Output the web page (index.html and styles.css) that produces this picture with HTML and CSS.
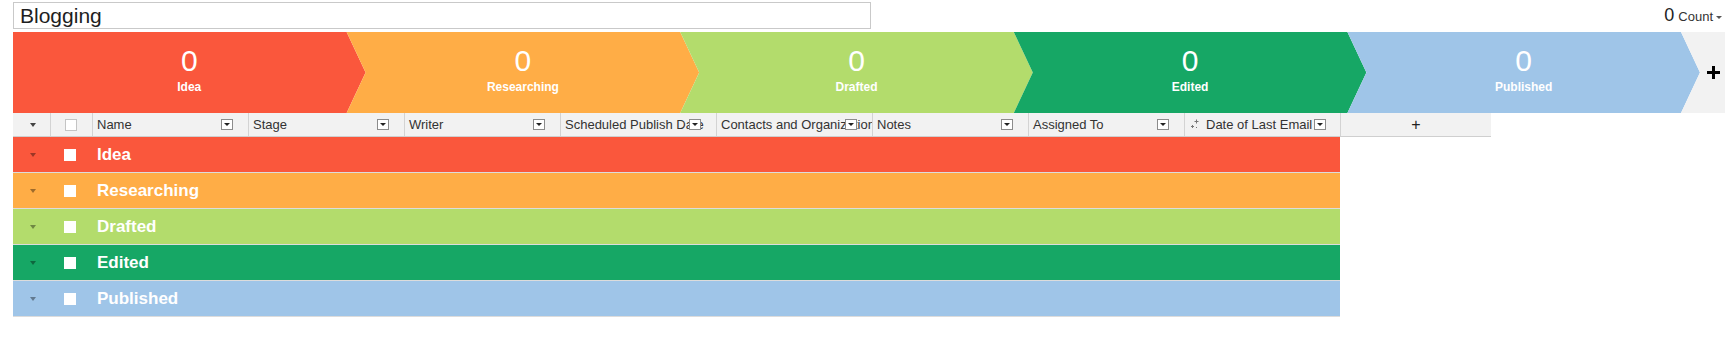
FILE: index.html
```html
<!DOCTYPE html>
<html>
<head>
<meta charset="utf-8">
<link rel="stylesheet" href="styles.css">
</head>
<body>
<div class="page">
  <div class="topbar">
    <div class="title-input">Blogging</div>
    <div class="count"><span class="count-num">0</span><span class="count-label">Count</span><span class="caret"></span></div>
  </div>

  <div class="stages">
    <div class="stage first s-idea"><div class="stage-num">0</div><div class="stage-name">Idea</div></div>
    <div class="stage s-research"><div class="stage-num">0</div><div class="stage-name">Researching</div></div>
    <div class="stage s-drafted"><div class="stage-num">0</div><div class="stage-name">Drafted</div></div>
    <div class="stage s-edited"><div class="stage-num">0</div><div class="stage-name">Edited</div></div>
    <div class="stage s-published"><div class="stage-num">0</div><div class="stage-name">Published</div></div>
    <div class="stage-add">
      <svg width="13" height="13" viewBox="0 0 13 13"><rect x="5" y="0" width="3" height="13" fill="#000"/><rect x="0" y="5" width="13" height="3" fill="#000"/></svg>
    </div>
  </div>

  <div class="grid">
    <div class="hrow">
      <div class="hcell c-arrow"><span class="tri"></span></div>
      <div class="hcell c-check"><span class="hbox"></span></div>
      <div class="hcell c-col"><span class="htext">Name</span><span class="dd"></span></div>
      <div class="hcell c-col"><span class="htext">Stage</span><span class="dd"></span></div>
      <div class="hcell c-col"><span class="htext">Writer</span><span class="dd"></span></div>
      <div class="hcell c-col"><span class="htext">Scheduled Publish Date</span><span class="dd"></span></div>
      <div class="hcell c-col"><span class="htext">Contacts and Organizations</span><span class="dd"></span></div>
      <div class="hcell c-col"><span class="htext">Notes</span><span class="dd"></span></div>
      <div class="hcell c-col"><span class="htext">Assigned To</span><span class="dd"></span></div>
      <div class="hcell c-col c-date">
        <svg class="spark" width="9" height="11" viewBox="0 0 9 11"><path d="M5.5 0.5v4M3.5 2.5h4M1.5 6v3M0 7.5h3" stroke="#777" stroke-width="1" fill="none"/><rect x="5" y="8" width="1" height="1" fill="#777"/></svg>
        <span class="htext">Date of Last Email</span><span class="dd"></span>
      </div>
      <div class="hcell c-add">+</div>
    </div>

    <div class="grow g-idea"><div class="g-arrow"><span class="gtri"></span></div><div class="g-check"><span class="gbox"></span></div><div class="g-label">Idea</div></div>
    <div class="grow g-research"><div class="g-arrow"><span class="gtri"></span></div><div class="g-check"><span class="gbox"></span></div><div class="g-label">Researching</div></div>
    <div class="grow g-drafted"><div class="g-arrow"><span class="gtri"></span></div><div class="g-check"><span class="gbox"></span></div><div class="g-label">Drafted</div></div>
    <div class="grow g-edited"><div class="g-arrow"><span class="gtri"></span></div><div class="g-check"><span class="gbox"></span></div><div class="g-label">Edited</div></div>
    <div class="grow g-published"><div class="g-arrow"><span class="gtri"></span></div><div class="g-check"><span class="gbox"></span></div><div class="g-label">Published</div></div>
  </div>
</div>
</body>
</html>
```

FILE: styles.css
```css
html, body {
  margin: 0;
  padding: 0;
  background: #fff;
}
body {
  width: 1725px;
  height: 346px;
  overflow: hidden;
  font-family: "Liberation Sans", Arial, sans-serif;
}
.page {
  padding: 2px 0 0 13px;
}

/* top bar */
.topbar {
  display: flex;
  justify-content: space-between;
  align-items: flex-start;
  height: 27px;
  margin-bottom: 3px;
}
.title-input {
  box-sizing: border-box;
  width: 858px;
  height: 27px;
  border: 1px solid #c9c9c9;
  padding-left: 6px;
  font-size: 21px;
  line-height: 25px;
  color: #1e1e1e;
}
.count {
  display: flex;
  align-items: baseline;
  padding-right: 3px;
  margin-top: 3px;
  color: #333;
}
.count-num {
  font-size: 18px;
  line-height: 20px;
  color: #222;
}
.count-label {
  font-size: 13px;
  margin-left: 4px;
}
.caret {
  width: 0;
  height: 0;
  border-left: 3px solid transparent;
  border-right: 3px solid transparent;
  border-top: 3px solid #555;
  margin-left: 3px;
  align-self: center;
  margin-top: 4px;
}

/* stage band */
.stages {
  display: flex;
  height: 81px;
}
.stage {
  flex: 0 0 352.6px;
  margin-right: -19px;
  box-sizing: border-box;
  padding-top: 14px;
  text-align: center;
  color: #fff;
  clip-path: polygon(0 0, calc(100% - 19px) 0, 100% 50%, calc(100% - 19px) 100%, 0 100%, 19px 50%);
}
.stage.first {
  clip-path: polygon(0 0, calc(100% - 19px) 0, 100% 50%, calc(100% - 19px) 100%, 0 100%);
}
.stage-num {
  font-size: 30px;
  line-height: 30px;
}
.stage-name {
  font-size: 12px;
  font-weight: bold;
  line-height: 14px;
  margin-top: 4px;
}
.s-idea { background: #fa573c; }
.s-research { background: #ffad46; }
.s-drafted { background: #b3dc6c; }
.s-edited { background: #16a765; }
.s-published { background: #9fc5e8; }
.stage-add {
  flex: 1;
  background: #f2f2f2;
  display: flex;
  align-items: center;
  padding-left: 26px;
  clip-path: polygon(0 0, 100% 0, 100% 100%, 0 100%, 19px 50%);
}

/* grid header */
.hrow {
  display: flex;
  height: 24px;
  box-sizing: border-box;
  background: #f2f2f2;
  border-bottom: 1px solid #cfcfcf;
  width: 1478px;
}
.hcell {
  position: relative;
  box-sizing: border-box;
  height: 23px;
  border-right: 1px solid #d3d3d3;
  display: flex;
  align-items: center;
  overflow: hidden;
  white-space: nowrap;
  font-size: 13px;
  color: #333;
}
.c-arrow {
  width: 38px;
  justify-content: center;
  padding-left: 2px;
}
.c-check {
  width: 42px;
  padding-left: 14px;
}
.c-col {
  width: 156px;
  padding-left: 4px;
}
.c-add {
  width: 150px;
  justify-content: center;
  font-size: 16px;
  color: #222;
  border-right: none;
}
.c-date {
  padding-left: 6px;
}
.spark {
  margin-right: 6px;
  flex: 0 0 auto;
}
.tri {
  width: 0;
  height: 0;
  border-left: 3.5px solid transparent;
  border-right: 3.5px solid transparent;
  border-top: 4px solid #444;
}
.hbox {
  width: 12px;
  height: 12px;
  box-sizing: border-box;
  background: #fff;
  border: 1px solid #c4c4c4;
}
.dd {
  position: absolute;
  right: 15px;
  top: 6px;
  width: 12px;
  height: 11px;
  box-sizing: border-box;
  border: 1px solid #8c8c8c;
  background: #fff;
}
.dd::after {
  content: "";
  position: absolute;
  left: 2px;
  top: 3px;
  border-left: 3px solid transparent;
  border-right: 3px solid transparent;
  border-top: 3px solid #222;
}
.c-date .dd {
  right: 14px;
}

/* group rows */
.grow {
  display: flex;
  align-items: center;
  width: 1327px;
  height: 36px;
  box-sizing: border-box;
  border-bottom: 1px solid #dcdcdc;
}
.g-arrow {
  width: 38px;
  display: flex;
  justify-content: center;
  padding-left: 2px;
  box-sizing: border-box;
}
.gtri {
  width: 0;
  height: 0;
  border-left: 3.5px solid transparent;
  border-right: 3.5px solid transparent;
  border-top: 4px solid rgba(0, 0, 0, 0.38);
}
.g-check {
  width: 42px;
  padding-left: 13px;
  box-sizing: border-box;
  display: flex;
}
.gbox {
  width: 12px;
  height: 12px;
  background: #fff;
}
.g-label {
  padding-left: 4px;
  font-size: 17px;
  font-weight: bold;
  color: #fff;
}
.g-idea { background: #fa573c; }
.g-research { background: #ffad46; }
.g-drafted { background: #b3dc6c; }
.g-edited { background: #16a765; }
.g-published { background: #9fc5e8; }
```
